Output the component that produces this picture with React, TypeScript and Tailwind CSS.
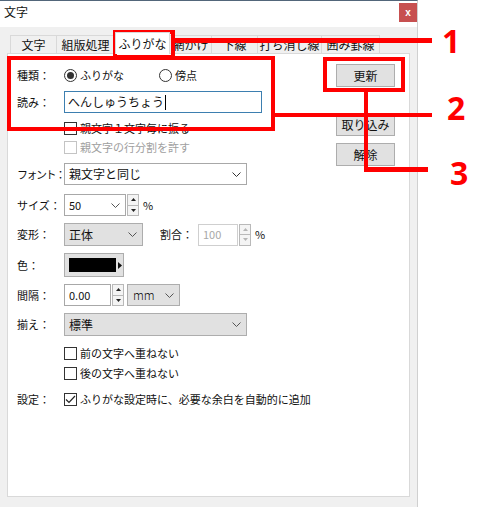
import React from "react";

// ふりがな設定ダイアログ（赤い注釈付きスクリーンショットの再現）

const FONT = "font-['Noto_Sans_CJK_JP','Noto_Sans',sans-serif]";

const Chevron = ({ color = "#555" }: { color?: string }) => (
  <svg width="9" height="5" viewBox="0 0 9 5" className="shrink-0">
    <path d="M0.5 0.5 L4.5 4.5 L8.5 0.5" stroke={color} fill="none" strokeWidth="1" />
  </svg>
);

const Spinner = ({ disabled = false }: { disabled?: boolean }) => {
  const c = disabled ? "#b5b5b5" : "#222";
  return (
    <div className="flex flex-col w-[12px] h-[22px] ml-[1px]">
      <div className="flex-1 border border-[#b9b9b9] bg-[#f4f4f4] flex items-center justify-center">
        <svg width="5" height="3" viewBox="0 0 5 3">
          <path d="M0 3 L2.5 0 L5 3 Z" fill={c} />
        </svg>
      </div>
      <div className="flex-1 border border-t-0 border-[#b9b9b9] bg-[#f4f4f4] flex items-center justify-center">
        <svg width="5" height="3" viewBox="0 0 5 3">
          <path d="M0 0 L2.5 3 L5 0 Z" fill={c} />
        </svg>
      </div>
    </div>
  );
};

const Checkbox = ({ checked = false, disabled = false }: { checked?: boolean; disabled?: boolean }) => (
  <div
    className={
      disabled
        ? "w-[13px] h-[13px] border border-[#c4c4c4] bg-white shrink-0"
        : "w-[13px] h-[13px] border border-[#333] bg-white shrink-0 flex items-center justify-center"
    }
  >
    {checked && (
      <svg width="11" height="9" viewBox="0 0 11 9">
        <path d="M1 4.5 L4 7.5 L10 1" stroke="#222" fill="none" strokeWidth="1.2" />
      </svg>
    )}
  </div>
);

const Radio = ({ checked = false }: { checked?: boolean }) => (
  <div className="w-[13px] h-[13px] rounded-full border border-[#333] bg-white flex items-center justify-center shrink-0">
    {checked && <div className="w-[7px] h-[7px] rounded-full bg-[#333]" />}
  </div>
);

const Label = ({ children, tight = false }: { children: React.ReactNode; tight?: boolean }) => (
  <div className={tight ? "w-[47px] shrink-0 whitespace-nowrap tracking-[-1.5px]" : "w-[47px] shrink-0 whitespace-nowrap"}>
    {children}
  </div>
);

const tabs = [
  { name: "文字", w: "w-[47px]" },
  { name: "組版処理", w: "w-[59px]" },
  { name: "ふりがな", w: "w-[55px]", active: true },
  { name: "網かけ", w: "w-[43px]" },
  { name: "下線", w: "w-[47px]" },
  { name: "打ち消し線", w: "w-[65px]" },
  { name: "囲み罫線", w: "w-[59px]" },
];

export default function App() {
  return (
    <div className={`relative w-[488px] h-[507px] bg-white text-[11px] text-[#111] ${FONT}`}>
      {/* ウィンドウ本体 */}
      <div className="w-[418px] h-[507px] flex flex-col border-t border-[#52667a] border-r border-r-[#d0d0d0]">
        {/* タイトルバー */}
        <div className="h-[26px] bg-white flex items-start justify-between">
          <div className="pl-[4px] pt-[5px] text-[12px] leading-none">文字</div>
          <div className="w-[18px] h-[19px] mt-[2px] bg-[#c75050] text-white text-[10px] font-bold flex items-center justify-center font-['Liberation_Sans',sans-serif]">
            x
          </div>
        </div>

        {/* 本体 */}
        <div className="flex-1 bg-[#f0f0f0] px-[7px] pt-[4px]">
          {/* タブ */}
          <div className="flex items-end h-[22px] pl-[3px] text-[12px] whitespace-nowrap">
            {tabs.map((t) =>
              t.active ? (
                <div
                  key={t.name}
                  className={`${t.w} h-[22px] bg-white border border-b-0 border-[#d9d9d9] flex items-center justify-center -mb-px relative z-10 leading-none`}
                >
                  {t.name}
                </div>
              ) : (
                <div
                  key={t.name}
                  className={`${t.w} h-[18px] bg-[#f0f0f0] border border-b-0 border-[#d9d9d9] -ml-px first:ml-0 flex items-center justify-center leading-none`}
                >
                  {t.name}
                </div>
              )
            )}
          </div>

          {/* タブパネル */}
          <div className="h-[444px] bg-white border border-[#d9d9d9] flex pl-[9px] pr-[13px]">
            {/* 左側フォーム */}
            <div className="w-[319px] flex flex-col pt-[10px] leading-none">
              <div className="h-[22px] flex items-center">
                <Label>種類：</Label>
                <Radio checked />
                <span className="ml-[3px]">ふりがな</span>
                <div className="ml-[35px]">
                  <Radio />
                </div>
                <span className="ml-[3px]">傍点</span>
              </div>

              <div className="h-[22px] mt-[5px] flex items-center">
                <Label>読み：</Label>
                <div className="w-[198px] h-[22px] border border-[#3d7fb0] bg-white flex items-center pl-[3px] text-[12px]">
                  へんしゅうちょう
                  <span className="w-px h-[15px] bg-black ml-[1px]" />
                </div>
              </div>

              <div className="h-[19px] mt-[6px] flex items-center pl-[47px]">
                <Checkbox />
                <span className="ml-[3px]">親文字１文字毎に振る</span>
              </div>
              <div className="h-[19px] flex items-center pl-[47px] text-[#a0a0a0]">
                <Checkbox disabled />
                <span className="ml-[3px]">親文字の行分割を許す</span>
              </div>

              <div className="h-[22px] mt-[6px] flex items-center">
                <Label tight>フォント：</Label>
                <div className="w-[183px] h-[22px] border border-[#a8a8a8] bg-white flex items-center justify-between pl-[4px] pr-[5px] text-[12px]">
                  <span>親文字と同じ</span>
                  <Chevron color="#333" />
                </div>
              </div>

              <div className="h-[22px] mt-[9px] flex items-center">
                <Label>サイズ：</Label>
                <div className="w-[62px] h-[22px] border border-[#a8a8a8] bg-white flex items-center justify-between pl-[4px] pr-[5px]">
                  <span>50</span>
                  <Chevron />
                </div>
                <Spinner />
                <span className="ml-[4px]">%</span>
              </div>

              <div className="h-[23px] mt-[7px] flex items-center">
                <Label>変形：</Label>
                <div className="w-[79px] h-[23px] border border-[#adadad] bg-[#e1e1e1] flex items-center justify-between pl-[4px] pr-[5px] text-[12px]">
                  <span>正体</span>
                  <Chevron />
                </div>
                <span className="ml-[17px]">割合：</span>
                <div className="w-[40px] h-[22px] ml-[5px] border border-[#cfcfcf] bg-white flex items-center pl-[4px] text-[#a8a8a8]">
                  100
                </div>
                <Spinner disabled />
                <span className="ml-[4px]">%</span>
              </div>

              <div className="h-[24px] mt-[7px] flex items-center">
                <Label>色：</Label>
                <div className="w-[60px] h-[24px] border border-[#adadad] bg-[#e1e1e1] flex items-center pl-[4px]">
                  <div className="w-[47px] h-[14px] bg-black" />
                  <svg width="4" height="7" viewBox="0 0 4 7" className="ml-[2px]">
                    <path d="M0 0 L4 3.5 L0 7 Z" fill="#111" />
                  </svg>
                </div>
              </div>

              <div className="h-[22px] mt-[7px] flex items-center">
                <Label>間隔：</Label>
                <div className="w-[47px] h-[22px] border border-[#a8a8a8] bg-white flex items-center pl-[4px]">
                  0.00
                </div>
                <Spinner />
                <div className="w-[53px] h-[22px] ml-[3px] border border-[#adadad] bg-[#e1e1e1] flex items-center justify-between pl-[5px] pr-[5px] text-[12px] font-light">
                  <span>mm</span>
                  <Chevron />
                </div>
              </div>

              <div className="h-[23px] mt-[7px] flex items-center">
                <Label>揃え：</Label>
                <div className="w-[183px] h-[23px] border border-[#adadad] bg-[#e1e1e1] flex items-center justify-between pl-[4px] pr-[5px] text-[12px]">
                  <span>標準</span>
                  <Chevron />
                </div>
              </div>

              <div className="h-[18px] mt-[8px] flex items-center pl-[47px]">
                <Checkbox />
                <span className="ml-[3px]">前の文字へ重ねない</span>
              </div>
              <div className="h-[18px] mt-[2px] flex items-center pl-[47px]">
                <Checkbox />
                <span className="ml-[3px]">後の文字へ重ねない</span>
              </div>

              <div className="h-[18px] mt-[8px] flex items-center">
                <Label>設定：</Label>
                <Checkbox checked />
                <span className="ml-[3px] whitespace-nowrap">ふりがな設定時に、必要な余白を自動的に追加</span>
              </div>
            </div>

            {/* 右側ボタン */}
            <div className="w-[59px] flex flex-col pt-[10px] text-[12px] leading-none">
              <div className="h-[23px] border border-[#adadad] bg-[#e1e1e1] flex items-center justify-center">更新</div>
              <div className="h-[23px] mt-[26px] border border-[#adadad] bg-[#e1e1e1] flex items-center justify-center whitespace-nowrap">取り込み</div>
              <div className="h-[23px] mt-[7px] border border-[#adadad] bg-[#e1e1e1] flex items-center justify-center">解除</div>
            </div>
          </div>
        </div>
      </div>

      {/* 赤い注釈 */}
      <div className="absolute left-[113px] top-[30px] w-[62px] h-[29px] border-4 border-[#ff0000]" />
      <div className="absolute left-[175px] top-[38px] w-[257px] h-[5px] bg-[#ff0000]" />
      <div className="absolute left-[7px] top-[56px] w-[268px] h-[75px] border-4 border-[#ff0000]" />
      <div className="absolute left-[275px] top-[113px] w-[157px] h-[4px] bg-[#ff0000]" />
      <div className="absolute left-[323px] top-[57px] w-[82px] h-[35px] border-4 border-[#ff0000]" />
      <div className="absolute left-[364px] top-[91px] w-[4px] h-[81px] bg-[#ff0000]" />
      <div className="absolute left-[364px] top-[167px] w-[64px] h-[5px] bg-[#ff0000]" />
      <div className="absolute left-[442px] top-[25px] text-[#ff0000] text-[32px] font-bold leading-none font-['Open_Sans',sans-serif]">1</div>
      <div className="absolute left-[447px] top-[92px] text-[#ff0000] text-[32px] font-bold leading-none font-['Open_Sans',sans-serif]">2</div>
      <div className="absolute left-[450px] top-[157px] text-[#ff0000] text-[32px] font-bold leading-none font-['Open_Sans',sans-serif]">3</div>
    </div>
  );
}
